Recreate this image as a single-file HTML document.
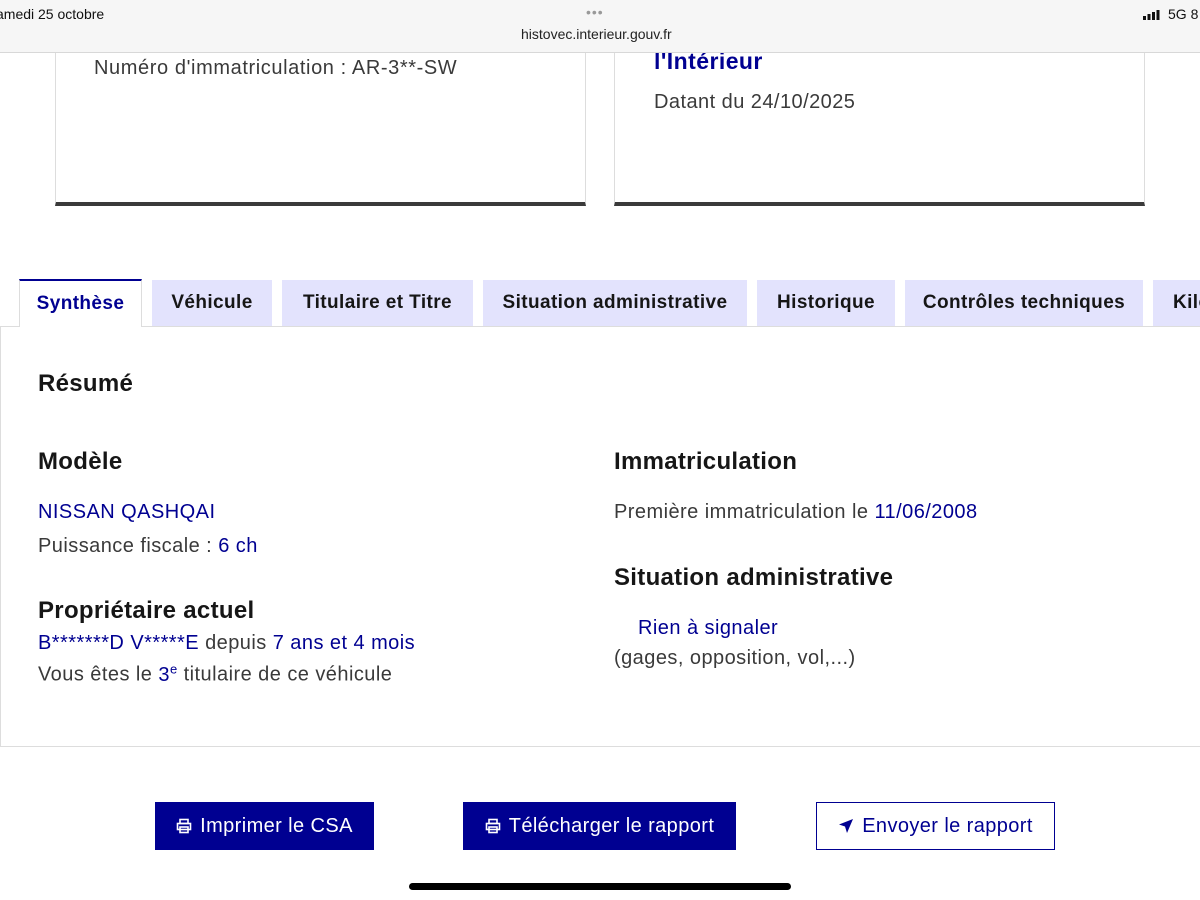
<!DOCTYPE html>
<html><head><meta charset="utf-8"><style>
body{margin:0;width:1200px;height:900px;overflow:hidden;background:#fff;font-family:"Liberation Sans",sans-serif;position:relative;color:#3a3a3a}
.a{position:absolute;white-space:nowrap}
.top{position:absolute;left:0;top:0;width:1200px;height:52px;background:#f6f6f6;border-bottom:1px solid #d8d8d8}
.card{position:absolute;top:40px;height:162px;border:1px solid #ddd;border-bottom:4px solid #3a3a3a;border-top:none;background:#fff}
.tab{position:absolute;top:280px;height:46px;background:#e3e3fd;color:#161616;font-weight:bold;font-size:19px;letter-spacing:0.4px;line-height:46px;text-align:center}
.panel{position:absolute;left:0;top:326px;width:1200px;height:421px;border-top:1px solid #ddd;border-bottom:1px solid #ddd;border-left:1px solid #ddd;box-sizing:border-box}
h{position:absolute;font-weight:bold;font-size:24px;letter-spacing:0.3px;color:#161616;white-space:nowrap}
.t{position:absolute;font-size:20px;letter-spacing:0.45px;white-space:nowrap;margin-top:2px}
.b{color:#000091}
.btn{position:absolute;top:802px;height:48px;box-sizing:border-box;font-size:20px;letter-spacing:0.4px;line-height:48px;text-align:center}
.btn svg{vertical-align:-2px;margin-right:8px}
</style></head><body>
<div class="card" style="left:55px;width:529px"></div>
<div class="card" style="left:614px;width:529px"></div>
<div class="t" style="left:94px;top:55px;letter-spacing:0.6px">Numéro d'immatriculation : AR-3**-SW</div>
<div class="t b" style="left:654px;top:46px;font-weight:bold;font-size:23px">l'Intérieur</div>
<div class="t" style="left:654px;top:89px">Datant du 24/10/2025</div>
<div class="top"></div>
<div class="a" style="left:-4px;top:6px;font-size:14px;color:#111">amedi 25 octobre</div>
<div class="a" style="left:586px;top:4px;font-size:14px;color:#999;letter-spacing:1px">•••</div>
<div class="a" style="left:521px;top:26px;font-size:14px;color:#222">histovec.interieur.gouv.fr</div>
<svg class="a" style="left:1143px;top:10px" width="20" height="10"><rect x="0" y="6" width="3" height="4" fill="#111"/><rect x="4.5" y="4" width="3" height="6" fill="#111"/><rect x="9" y="2" width="3" height="8" fill="#111"/><rect x="13.5" y="0" width="3" height="10" fill="#111"/></svg>
<div class="a" style="left:1168px;top:6px;font-size:14px;color:#111">5G 8</div>
<div class="panel"></div>
<div class="tab" style="left:19px;width:123px;background:#fff;color:#000091;border-top:2px solid #000091;border-left:1px solid #ddd;border-right:1px solid #ddd;top:279px;height:48px;box-sizing:border-box;line-height:46px">Synthèse</div>
<div class="tab" style="left:152px;width:120px">Véhicule</div>
<div class="tab" style="left:282px;width:191px">Titulaire et Titre</div>
<div class="tab" style="left:483px;width:264px">Situation administrative</div>
<div class="tab" style="left:757px;width:138px">Historique</div>
<div class="tab" style="left:905px;width:238px">Contrôles techniques</div>
<div class="tab" style="left:1153px;width:60px;text-align:left;padding-left:20px;box-sizing:border-box">Kilo</div>
<h style="left:38px;top:370px">Résumé</h>
<h style="left:38px;top:448px">Modèle</h>
<div class="t b" style="left:38px;top:499px">NISSAN QASHQAI</div>
<div class="t" style="left:38px;top:533px">Puissance fiscale : <span class="b">6 ch</span></div>
<h style="left:38px;top:597px">Propriétaire actuel</h>
<div class="t b" style="left:38px;top:630px">B*******D V*****E <span style="color:#3a3a3a">depuis</span> 7 ans et 4 mois</div>
<div class="t" style="left:38px;top:659px">Vous êtes le <span class="b">3<sup style="font-size:13px">e</sup></span> titulaire de ce véhicule</div>
<h style="left:614px;top:448px">Immatriculation</h>
<div class="t" style="left:614px;top:499px">Première immatriculation le <span class="b">11/06/2008</span></div>
<h style="left:614px;top:564px">Situation administrative</h>
<div class="t b" style="left:638px;top:615px">Rien à signaler</div>
<div class="t" style="left:614px;top:645px">(gages, opposition, vol,...)</div>
<div class="btn" style="left:155px;width:219px;background:#000091;color:#fff"><svg width="16" height="16" viewBox="0 0 16 16" fill="none" stroke="#fff" stroke-width="1.6"><rect x="4" y="1.5" width="8" height="4"/><rect x="1.5" y="5.5" width="13" height="6"/><rect x="4" y="9" width="8" height="5.5"/></svg>Imprimer le CSA</div>
<div class="btn" style="left:463px;width:273px;background:#000091;color:#fff"><svg width="16" height="16" viewBox="0 0 16 16" fill="none" stroke="#fff" stroke-width="1.6"><rect x="4" y="1.5" width="8" height="4"/><rect x="1.5" y="5.5" width="13" height="6"/><rect x="4" y="9" width="8" height="5.5"/></svg>Télécharger le rapport</div>
<div class="btn" style="left:816px;width:239px;border:1px solid #000091;color:#000091;line-height:46px"><svg width="16" height="16" viewBox="0 0 16 16"><path d="M15 1 L1 6.5 L7 8.5 L9 15 Z" fill="#000091"/></svg>Envoyer le rapport</div>
<div class="a" style="left:409px;top:883px;width:382px;height:7px;border-radius:4px;background:#000"></div>
</body></html>
